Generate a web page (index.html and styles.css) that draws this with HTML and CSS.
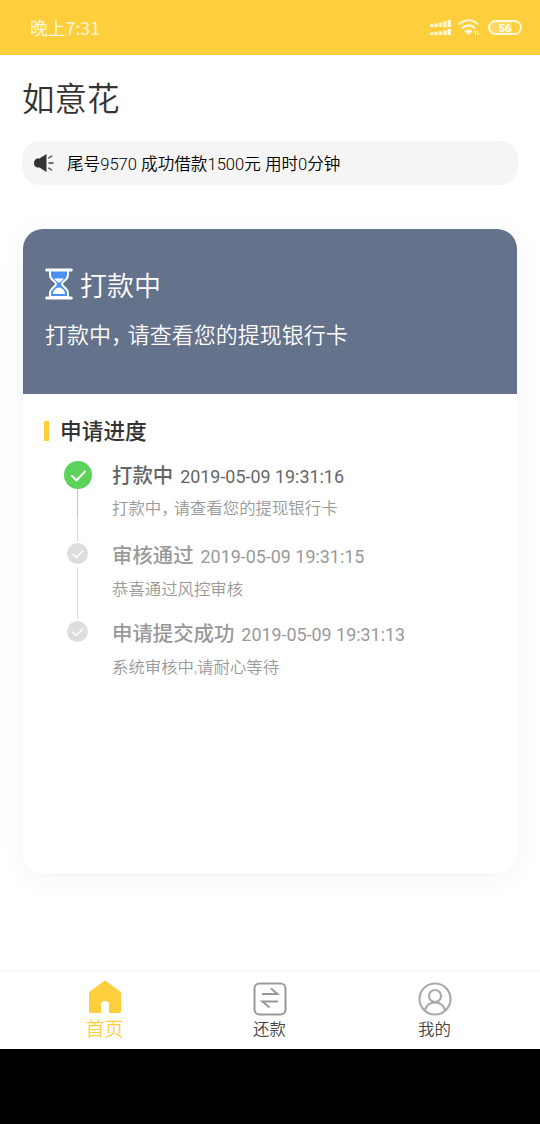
FILE: index.html
```html
<!DOCTYPE html>
<html lang="zh-CN">
<head>
<meta charset="UTF-8" />
<meta name="viewport" content="width=device-width, initial-scale=1" />
<title>如意花</title>
<link rel="stylesheet" href="styles.css">
</head>
<body>
<header class="status-bar">
  <span class="time">晚上7:31</span>
  <div class="status-icons">
    <svg class="signal" width="21" height="16" viewBox="0 0 21 16" fill="#fff8dc">
      <path d="M0 4.200h3.400V7H0zM4.400 3.400h3.400V7H4.400zM8.800 2.400h3.400V7H8.800zM13.200 1.200h3.400V7h-3.400zM17.600 0H21v7h-3.400zM0 12.600h3.400V15H0zM4.400 12h3.400v3H4.400zM8.800 11.200h3.400V15H8.800zM13.200 10.200h3.400V15h-3.400zM17.600 9H21v6h-3.400z"/>
    </svg>
    <svg class="wifi" width="22" height="17" viewBox="0 0 22 17" fill="none" stroke="#fff8dc" stroke-width="2.200">
      <path d="M.8 5.600C6.500-.2 14.500-.2 20.200 5.600M4 9.200c3.800-3.800 9.200-3.800 13 0"/>
      <path d="M6.500 12.200c2.400-2.200 5.600-2.200 8 0L10.500 16z" fill="#fff8dc" stroke="none"/>
      <path d="M17.500 16v-4.500l-1.500 2M19.500 11.500V16l1.500-2" stroke-width="1"/>
    </svg>
    <div class="battery"><span>56</span></div>
  </div>
</header>

<main>
  <h1>如意花</h1>
  <div class="notice">
    <svg width="20" height="18" viewBox="0 0 20 18">
      <path d="M12.500 0v18L5.500 13.500H3Q0 12.500 0 9t3-4.500h2.500z" fill="#333"/>
      <path d="M14.200 4.200l4-2.500M14.500 9H19.500M14.200 13.800l4 2.500" stroke="#444" stroke-width="1.300"/>
    </svg>
    <span>尾号9570 成功借款1500元 用时0分钟</span>
  </div>

  <section class="card">
    <div class="card-head">
      <h2>
        <svg width="28" height="32" viewBox="0 0 28 32">
          <path d="M5 2v5c0 5 6 6.500 6 9s-6 4-6 9v4h18v-4c0-5-6-6.500-6-9s6-4 6-9V2z" fill="#4a90f5" stroke="#fff" stroke-width="2"/>
          <path d="M9 10.500h10q-1.500 2-5 4.500-3.500-2.500-5-4.500zM8 26c0-4 3.500-6.500 6-6.500s6 2.500 6 6.500z" fill="#fff"/>
          <path d="M1.700 2h24.600M1.700 30h24.600" stroke="#fff" stroke-width="3" stroke-linecap="round"/>
        </svg>
        <span>打款中</span>
      </h2>
      <p>打款中<span class="comma">&#65292;</span>请查看您的提现银行卡</p>
    </div>

    <div class="progress">
      <h3>申请进度</h3>
      <ul class="timeline">
        <li class="active">
          <div class="rail">
            <svg class="dot" viewBox="0 0 28 28"><circle cx="14" cy="14" r="14"/><path d="M7.500 14.500l5 4.800 9-9.300"/></svg>
            <div class="line"></div>
          </div>
          <div class="info">
            <h4>打款中<time>2019-05-09 19:31:16</time></h4>
            <p>打款中<span class="comma">&#65292;</span>请查看您的提现银行卡</p>
          </div>
        </li>
        <li>
          <div class="rail">
            <svg class="dot" viewBox="0 0 28 28"><circle cx="14" cy="14" r="14"/><path d="M7.500 14.500l5 4.800 9-9.300"/></svg>
            <div class="line"></div>
          </div>
          <div class="info">
            <h4>审核通过<time>2019-05-09 19:31:15</time></h4>
            <p>恭喜通过风控审核</p>
          </div>
        </li>
        <li>
          <div class="rail">
            <svg class="dot" viewBox="0 0 28 28"><circle cx="14" cy="14" r="14"/><path d="M7.500 14.500l5 4.800 9-9.300"/></svg>
          </div>
          <div class="info">
            <h4>申请提交成功<time>2019-05-09 19:31:13</time></h4>
            <p>系统审核中,请耐心等待</p>
          </div>
        </li>
      </ul>
    </div>
  </section>
</main>

<nav class="tabbar">
  <a class="tab current">
    <svg width="34" height="34" viewBox="0 0 34 34">
      <path d="M15.300 1.500q1.700-1.300 3.400 0L32 11.500q1 .8 1 2V31.500q0 1.500-1.500 1.500H21v-8q0-4-4-4t-4 4v8H2.500Q1 33 1 31.500v-18q0-1.200 1-2z" fill="#ffce3d"/>
    </svg>
    <span>首页</span>
  </a>
  <a class="tab">
    <svg width="34" height="34" viewBox="0 0 34 34" fill="none" stroke="#999" stroke-width="2">
      <rect x="1.500" y="1.500" width="31" height="31" rx="5"/>
      <path d="M9 12h15.500L18 6.500M25 19.500H9.500l7 6"/>
    </svg>
    <span>还款</span>
  </a>
  <a class="tab">
    <svg width="34" height="34" viewBox="0 0 34 34" fill="none" stroke="#aaa" stroke-width="2.200">
      <circle cx="17" cy="17" r="15.500"/>
      <circle cx="17" cy="14" r="6"/>
      <path d="M6.800 28C8.500 23.500 12 20.500 17 20.500s8.500 3 10.200 7.500"/>
    </svg>
    <span>我的</span>
  </a>
</nav>
</body>
</html>
```
FILE: styles.css
```css
* {
  box-sizing: border-box;
}
body {
  margin: 0;
  height: 1124px;
  display: flex;
  flex-direction: column;
  background: #000;
  color: #333;
  font-family: Roboto, "Noto Sans CJK SC", sans-serif;
  font-weight: 350;
}
h1, h2, h3, h4, p, ul {
  margin: 0;
  padding: 0;
  font-weight: inherit;
}
svg {
  display: block;
  flex: none;
}
.status-bar {
  height: 55px;
  padding: 0 18px 0 30px;
  display: flex;
  align-items: center;
  justify-content: space-between;
  background: #ffce3d;
  color: #fff8dc;
}
.time {
  padding-bottom: 2px;
  font-family: "Noto Sans CJK SC", sans-serif;
  font-size: 17.8px;
  font-weight: 400;
}
.status-icons {
  display: flex;
  align-items: center;
}
.wifi {
  margin: 0 8px 0 7px;
}
.battery {
  width: 34px;
  height: 15px;
  border: 2px solid #fff8dc;
  border-radius: 8px;
  background: linear-gradient(90deg, #ffd965 75%, #ffce3d 75%);
  color: #fffdf2;
  font-size: 11.5px;
  font-weight: 700;
  line-height: 12px;
  text-align: center;
}
main {
  height: 914px;
  padding: 20px 22px 0;
  background: #fff;
}
h1 {
  font-size: 32.5px;
  line-height: 50px;
}
.notice {
  height: 44px;
  margin-top: 16px;
  padding: 0 12px;
  display: flex;
  align-items: center;
  gap: 13px;
  border-radius: 18px;
  background: #f5f5f5;
  color: #000;
  font-size: 16.6px;
}
.card {
  width: 494px;
  height: 644px;
  margin: 44px 0 0 1px;
  border-radius: 20px;
  background: #fff;
  box-shadow: 0 4px 30px rgba(0,0,0,0.05);
  overflow: hidden;
}
.card-head {
  height: 165px;
  padding: 36px 22px 0;
  background: #65728c;
  color: #fff;
}
.card-head h2 {
  display: flex;
  align-items: center;
  gap: 7px;
  font-size: 27px;
  line-height: 38px;
}
.card-head h2 span {
  padding-top: 3px;
  margin-bottom: -3px;
}
.card-head p {
  margin-top: 17px;
  font-size: 22px;
  line-height: 32px;
}
/* half-width comma plus a small gap */
.comma {
  margin-right: 0.26em;
  font-feature-settings: "halt";
}
.progress {
  padding: 22px 21px 0;
}
.progress h3 {
  display: flex;
  align-items: center;
  gap: 12px;
  font-size: 21.7px;
  font-weight: 500;
  line-height: 32px;
}
.progress h3::before {
  content: "";
  width: 5px;
  height: 20px;
  margin: -2px -1px 0 0;
  background: #ffce3d;
}
.timeline {
  padding: 14px 0 0 19px;
  list-style: none;
}
.timeline li {
  display: flex;
  gap: 20px;
  height: 78px;
  color: #999;
}
.timeline .active {
  height: 80px;
  color: #666;
}
.rail {
  width: 29px;
  display: flex;
  flex-direction: column;
  align-items: center;
}
.dot {
  width: 21px;
  height: 21px;
  margin: 1px 0 3px;
}
.dot circle {
  fill: #ddd;
}
.dot path {
  fill: none;
  stroke: #fff;
  stroke-width: 2;
}
.line {
  width: 1px;
  height: 52px;
  background: #d8d8d8;
}
.active .dot {
  width: 28px;
  height: 28px;
  margin: -1px 0 0;
}
.active .dot circle {
  fill: #5dd25b;
}
.active .line {
  background: linear-gradient(#f2cb3a 52%, #d8d8d8 52%);
}
.info h4 {
  font-size: 20.4px;
  font-weight: 500;
  line-height: 28px;
}
.info time {
  margin-left: 7px;
  font-size: 17.9px;
  font-weight: 400;
}
.info p {
  margin-top: 7px;
  color: #999;
  font-size: 16.4px;
  line-height: 24px;
}
.active .info p {
  margin-top: 6px;
}
.tabbar {
  height: 80px;
  padding: 10px 23px 0 22px;
  display: flex;
  background: #fff;
  border-top: 3px solid #f8f8f8;
}
.tab {
  flex: 1;
  display: flex;
  flex-direction: column;
  align-items: center;
  color: #444;
  font-size: 16.4px;
  line-height: 28px;
}
.current {
  color: #ffce3d;
  font-size: 19px;
}
.current svg {
  margin: -2px 0 2px;
}
```
